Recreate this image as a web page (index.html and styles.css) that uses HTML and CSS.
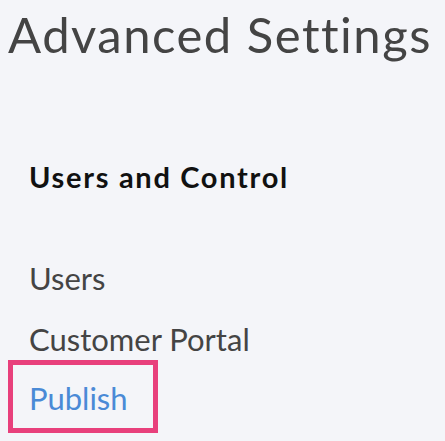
FILE: index.html
```html
<!DOCTYPE html>
<html lang="en">
<head>
    <meta charset="UTF-8">
    <meta name="viewport" content="width=device-width, initial-scale=1.0">
    <title>Advanced Settings</title>
    <link rel="stylesheet" href="styles.css">
</head>
<body>
    <div class="page">
        <h1 class="page-title">Advanced Settings</h1>

        <div class="section">
            <h3 class="section-title">Users and Control</h3>
            <ul class="menu">
                <li><a href="#">Users</a></li>
                <li><a href="#">Customer Portal</a></li>
                <li class="highlight"><a href="#" class="active">Publish</a></li>
            </ul>
        </div>
    </div>
</body>
</html>
```

FILE: styles.css
```css
html, body {
    margin: 0;
    padding: 0;
    background: #f4f5f9;
}
body {
    font-family: Lato, "Open Sans", sans-serif;
    color: #444;
}
.page {
    padding: 0 8px;
}
.page-title {
    margin: 0;
    padding-top: 4px;
    font-size: 49px;
    font-weight: 400;
    line-height: 60px;
    letter-spacing: 1.5px;
    color: #444;
}
.section {
    padding: 0 0 0 21px;
}
.section-title {
    margin: 96px 0 0;
    font-size: 29px;
    font-weight: 700;
    line-height: 34px;
    letter-spacing: 1.7px;
    color: #111;
}
.menu {
    list-style: none;
    margin: 66px 0 0;
    padding: 0;
}
.menu li {
    font-size: 31px;
    line-height: 36px;
    margin: 0;
}
.menu li + li {
    margin-top: 25px;
}
.menu a {
    color: #444;
    text-decoration: none;
}
.menu a.active {
    color: #4a8ad6;
}
.menu li.highlight {
    margin: 3px 0 0 -21px;
    width: 124px;
    padding: 15px 0 12px 16px;
    border: 5px solid #e8407c;
}
```
